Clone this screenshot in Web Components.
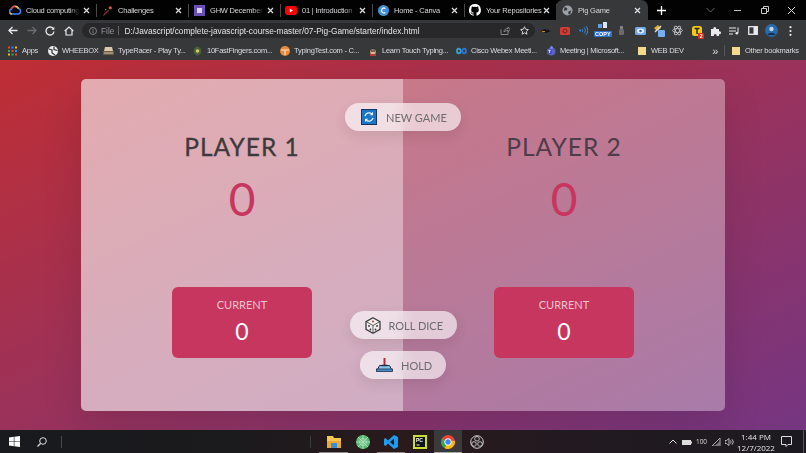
<!DOCTYPE html>
<html lang="en">
<head>
<meta charset="utf-8">
<title>Pig Game</title>
<style>
  html, body { margin: 0; height: 100%; overflow: hidden; }
  body {
    display: flex;
    flex-direction: column;
    width: 806px;
    height: 453px;
    font-family: "Liberation Sans", "Noto Sans", sans-serif;
  }
  svg { display: block; }
</style>
</head>
<body>
<tab-strip>
  <chrome-tab label="Cloud computing" fade>
    <svg viewBox="0 0 12 10" width="12" height="10"><path d="M3 9a2.5 2.5 0 0 1-.6-4.9A3.8 3.8 0 0 1 9.5 3.6 2.8 2.8 0 0 1 9.5 9z" fill="none" stroke="#4285f4" stroke-width="1.6"/><path d="M2.4 4.1A3.8 3.8 0 0 1 6 1.2" fill="none" stroke="#ea4335" stroke-width="1.6"/><path d="M6 1.2a3.8 3.8 0 0 1 3.5 2.4" fill="none" stroke="#fbbc05" stroke-width="1.6"/><path d="M3 9a2.5 2.5 0 0 1-2-1.2" fill="none" stroke="#fbbc05" stroke-width="1.6"/></svg>
  </chrome-tab>
  <chrome-tab label="Challenges">
    <svg viewBox="0 0 12 12" width="11" height="11"><path d="M1 11 7 5l1 1-6 6z" fill="#7d2f35"/><circle cx="9" cy="3" r="1.7" fill="#e0564a"/><circle cx="4" cy="5" r=".7" fill="#d8a23a"/></svg>
  </chrome-tab>
  <chrome-tab label="GHW December" fade>
    <svg viewBox="0 0 11 11" width="11" height="11"><rect width="11" height="11" fill="#6a4fb5"/><rect x="3" y="3" width="5" height="5" fill="#d9d2ef"/></svg>
  </chrome-tab>
  <chrome-tab label="01 | Introduction" fade>
    <svg viewBox="0 0 12 9" width="12" height="9"><rect width="12" height="9" rx="2.4" fill="#f00"/><path d="M4.8 2.6v3.800L8 4.5z" fill="#fff"/></svg>
  </chrome-tab>
  <chrome-tab label="Home - Canva">
    <svg viewBox="0 0 11 11" width="11" height="11"><circle cx="5.5" cy="5.5" r="5.5" fill="#3f8fd8"/><path d="M7.4 3.6A2.4 2.4 0 1 0 7.4 7.4" fill="none" stroke="#fff" stroke-width="1.2"/></svg>
  </chrome-tab>
  <chrome-tab label="Your Repositories">
    <svg viewBox="0 0 16 16" width="12" height="12"><path fill="#fff" d="M8 0a8 8 0 0 0-2.500 15.600c.4.100.5-.2.5-.4v-1.400c-2.200.5-2.700-1-2.700-1-.4-.9-.9-1.200-.9-1.200-.7-.5.100-.5.100-.5.800.100 1.200.8 1.200.8.700 1.200 1.900.9 2.300.7.100-.5.300-.9.500-1.100-1.800-.2-3.600-.9-3.600-4 0-.9.300-1.600.8-2.100-.1-.2-.4-1 .1-2.100 0 0 .7-.2 2.200.8a7.600 7.600 0 0 1 4 0c1.500-1 2.200-.8 2.200-.8.400 1.100.2 1.900.1 2.100.5.600.8 1.300.8 2.100 0 3.100-1.900 3.700-3.600 3.900.3.300.5.800.5 1.500v2.200c0 .2.100.5.600.4A8 8 0 0 0 8 0z"/></svg>
  </chrome-tab>
  <chrome-tab label="Pig Game" active>
    <svg viewBox="0 0 12 12" width="11" height="11"><circle cx="6" cy="6" r="5.500" fill="#9aa0a6"/><path d="M3 2l3 2-1 2-3 0zM7 7l3-1-1 4-2 0z" fill="#35363a"/></svg>
  </chrome-tab>
</tab-strip>

<browser-toolbar url="D:/Javascript/complete-javascript-course-master/07-Pig-Game/starter/index.html"></browser-toolbar>

<bookmark-bar>
  <bookmark-item label="Apps" w="16"><svg viewBox="0 0 9 9" width="9" height="10"><rect width="2" height="2" fill="#ea4335"/><rect x="3.500" width="2" height="2" fill="#4285f4"/><rect x="7" width="2" height="2" fill="#fbbc05"/><rect y="3.500" width="2" height="2" fill="#34a853"/><rect x="3.500" y="3.500" width="2" height="2" fill="#ea4335"/><rect x="7" y="3.500" width="2" height="2" fill="#4285f4"/><rect y="7" width="2" height="2" fill="#fbbc05"/><rect x="3.500" y="7" width="2" height="2" fill="#34a853"/><rect x="7" y="7" width="2" height="2" fill="#ea4335"/></svg></bookmark-item>
  <bookmark-item label="WHEEBOX" w="32"><svg viewBox="0 0 10 10" width="10" height="10"><circle cx="5" cy="5" r="5" fill="#eee"/><path d="M1 3l3 1 0 3 3 2M6 0.500l0 3 3.500 1" fill="none" stroke="#333" stroke-width="1.200"/></svg></bookmark-item>
  <bookmark-item label="TypeRacer - Play Ty..." w="65"><svg viewBox="0 0 11 10" width="11" height="10"><path d="M2 1h7l1 4H1z" fill="#d8c9a8"/><rect x="0" y="5" width="11" height="4" fill="#6e5a44"/><path d="M1 7h9" stroke="#e8e2d4" stroke-width=".8"/></svg></bookmark-item>
  <bookmark-item label="10FastFingers.com..." w="63"><svg viewBox="0 0 10 11" width="9" height="10"><path d="M5 0l4 3v5l-4 3-4-3V3z" fill="#47613a"/><circle cx="5" cy="5.500" r="2" fill="#d9c86a"/></svg></bookmark-item>
  <bookmark-item label="TypingTest.com - C..." w="64"><svg viewBox="0 0 10 10" width="10" height="10"><circle cx="5" cy="5" r="5" fill="#e8883a"/><path d="M1 4h8M5 4v5" stroke="#f7e2c8" stroke-width="1.200"/></svg></bookmark-item>
  <bookmark-item label="Learn Touch Typing..." w="65"><svg viewBox="0 0 10 10" width="10" height="10"><path d="M1 6l4-4 4 4z" fill="#222"/><circle cx="5" cy="6" r="2.800" fill="#e3b48c"/><rect x="2" y="8" width="6" height="2" fill="#b73b3b"/><path d="M3 5h4" stroke="#111"/></svg></bookmark-item>
  <bookmark-item label="Cisco Webex Meeti..." w="65"><svg viewBox="0 0 11 10" width="11" height="10"><path d="M5 5C4 1.500 1 2 1 5s3 3.500 4 0z" fill="none" stroke="#35a4d8" stroke-width="1.800"/><path d="M6 5c1 3.500 4 3 4 0s-3-3.500-4 0z" fill="none" stroke="#2f76d2" stroke-width="1.800"/></svg></bookmark-item>
  <bookmark-item label="Meeting | Microsoft..." w="67"><svg viewBox="0 0 10 10" width="10" height="10"><circle cx="5.500" cy="5.500" r="4" fill="#5b5fc7"/><circle cx="5.500" cy="1.500" r="1.500" fill="#7b83eb"/><rect x="1" y="3" width="5" height="5" fill="#4b53bc"/><path d="M2.300 4.300h2.400M3.500 4.300v2.600" stroke="#fff" stroke-width=".8"/></svg></bookmark-item>
  <bookmark-item label="WEB DEV" w="29"><svg viewBox="0 0 10 10" width="8" height="10"><path d="M0 0h10v10H0z" fill="#f2d98b"/></svg></bookmark-item>
  <span slot="end" class="more">»</span>
  <span slot="end" class="sep"></span>
  <bookmark-item slot="end" label="Other bookmarks" w="55"><svg viewBox="0 0 10 10" width="8" height="10"><path d="M0 0h10v10H0z" fill="#f2d98b"/></svg></bookmark-item>
</bookmark-bar>

<pig-game></pig-game>

<win-taskbar></win-taskbar>

<script>
class TabStrip extends HTMLElement {
  constructor() {
    super();
    this.attachShadow({ mode: "open" });
    this.shadowRoot.innerHTML = `
      <style>
        :host { display: flex; height: 20px; flex: none; background: #020202; padding-left: 5px; color: #e8eaed; font-size: 7.500px; letter-spacing: -.2px; filter: blur(.3px); }
        .plus { width: 22px; margin-left: 2px; display: flex; align-items: center; justify-content: center; }
        .win { margin-left: auto; display: flex; align-items: center; }
        .win span { width: 27px; display: flex; justify-content: center; }
      </style>
      <slot></slot>
      <span class="plus"><svg width="9" height="9" viewBox="0 0 9 9"><path d="M4.500 0v9M0 4.500h9" stroke="#fff" stroke-width="1.300"/></svg></span>
      <div class="win">
        <span><svg width="9" height="6" viewBox="0 0 9 6"><path d="M.5 1l4 4 4-4" fill="none" stroke="#666" stroke-width="1"/></svg></span>
        <span><svg width="9" height="3" viewBox="0 0 9 3"><path d="M1 1.500h7" stroke="#bbb"/></svg></span>
        <span><svg width="8" height="8" viewBox="0 0 8 8"><path d="M.5 2.500h5v5h-5zM2.500 2.500v-2h5v5h-2" fill="none" stroke="#ccc"/></svg></span>
        <span style="margin-right:1px"><svg width="9" height="9" viewBox="0 0 9 9"><path d="M1 1l7 7M8 1l-7 7" stroke="#ddd"/></svg></span>
      </div>`;
  }
}

class ChromeTab extends HTMLElement {
  constructor() {
    super();
    this.attachShadow({ mode: "open" });
    this.shadowRoot.innerHTML = `
      <style>
        :host { display: flex; align-items: center; width: 92px; box-sizing: border-box; padding: 0 6px 0 4px; position: relative; }
        :host(:not([active])):after { content: ""; position: absolute; right: 0; top: 4px; bottom: 3px; width: 1px; background: #4a4a4a; }
        :host([active]) { background: #37383a; border-radius: 7px 7px 0 0; margin-left: -1px; padding-left: 5px; }
        .icon { width: 12px; display: flex; justify-content: center; flex: none; }
        .text { margin-left: 5px; flex: 1; min-width: 0; white-space: nowrap; color: #d7d8da; }
        :host([fade]) .text { -webkit-mask-image: linear-gradient(to right, #000 80%, transparent); }
        .close { width: 9px; flex: none; margin-left: 2px; }
      </style>
      <span class="icon"><slot></slot></span>
      <span class="text"></span>
      <svg class="close" width="7" height="7" viewBox="0 0 7 7"><path d="M1 1l5 5M6 1l-5 5" stroke="#dfe1e5" stroke-width="1.200"/></svg>`;
    this.shadowRoot.querySelector(".text").textContent = this.getAttribute("label");
  }
}

class BrowserToolbar extends HTMLElement {
  constructor() {
    super();
    this.attachShadow({ mode: "open" });
    this.shadowRoot.innerHTML = `
      <style>
        :host { display: flex; align-items: center; height: 21px; flex: none; background: #37383a; padding: 0 4px; color: #e3e4e6; font-size: 8.300px; filter: blur(.3px); }
        .nav { display: flex; width: 74px; margin-right: 4px; flex: none; }
        .nav span { width: 18.500px; display: flex; justify-content: center; }
        .omni { width: 453px; height: 15px; flex: none; box-sizing: border-box; background: #28282a; border-radius: 8px; display: flex; align-items: center; padding: 0 6px 0 7px; }
        .file { color: #93969a; margin-left: 4px; }
        .bar { width: 1px; height: 9px; background: #666; margin: 0 5px 0 4px; }
        .url { flex: 1; white-space: nowrap; }
        .omni svg { flex: none; }
        .exts { display: flex; align-items: center; margin-left: 2px; }
        .exts > span { width: 18.800px; display: flex; justify-content: center; align-items: center; position: relative; flex: none; }
        .copy { font: 700 5.500px/6px "Liberation Sans", sans-serif; background: #2f6fd0; color: #fff; padding: 0 1px; margin-top: 6px; }
        .badge { position: absolute; right: 2px; bottom: -3px; background: #d93025; color: #fff; font: 700 5px/6px "Liberation Sans", sans-serif; width: 6px; text-align: center; border-radius: 1px; }
      </style>
      <div class="nav">
        <span><svg width="10" height="9" viewBox="0 0 10 9"><path d="M9.500 4.500H1M4.500 1L1 4.500 4.500 8" fill="none" stroke="#e8eaed" stroke-width="1.300"/></svg></span>
        <span><svg width="10" height="9" viewBox="0 0 10 9"><path d="M.5 4.500H9M5.500 1L9 4.500 5.500 8" fill="none" stroke="#6b6c70" stroke-width="1.300"/></svg></span>
        <span><svg width="10" height="10" viewBox="0 0 10 10"><path d="M8.500 3A4 4 0 1 0 9 5.500" fill="none" stroke="#e8eaed" stroke-width="1.300"/><path d="M9.300.8v3h-3z" fill="#e8eaed"/></svg></span>
        <span><svg width="10" height="10" viewBox="0 0 10 10"><path d="M.7 5L5 1l4.300 4M2 4.300V9h6V4.300" fill="none" stroke="#e8eaed" stroke-width="1.200"/></svg></span>
      </div>
      <div class="omni">
        <svg width="8" height="8" viewBox="0 0 8 8"><circle cx="4" cy="4" r="3.500" fill="none" stroke="#93969a" stroke-width=".8"/><path d="M4 3.500V6M4 2v1" stroke="#93969a" stroke-width=".8"/></svg>
        <span class="file">File</span><span class="bar"></span>
        <span class="url"></span>
        <svg width="10" height="9" viewBox="0 0 10 9" style="margin-right:10px"><path d="M1 3.500V8.500H8V6M4 6c0-2.500 2-3.500 4-3.500V1l2 2.500L8 6V4.500C6 4.500 5 5 4 6z" fill="none" stroke="#9a9b9e" stroke-width=".8"/></svg>
        <svg width="9" height="9" viewBox="0 0 10 10"><path d="M5 .8l1.300 2.800 3 .4-2.200 2.100.6 3L5 7.600 2.300 9.100l.6-3L.7 4l3-.4z" fill="none" stroke="#e3e4e6"/></svg>
      </div>
      <div class="exts">
        <span><svg width="10" height="5" viewBox="0 0 10 5"><path d="M0 3l4-2 6 2-5 2z" fill="#111"/><rect x="1" y="3" width="3" height="1" fill="#c80"/></svg></span>
        <span><svg width="10" height="9" viewBox="0 0 10 9"><rect y="1" width="10" height="8" rx="1.500" fill="#d13c34"/><circle cx="5" cy="5" r="2" fill="none" stroke="#7b1f1b"/></svg></span>
        <span><svg width="9" height="9" viewBox="0 0 9 9"><path d="M5 1.500a4 4 0 0 1 0 6M6.800 0a6 6 0 0 1 0 9M3 3a2 2 0 0 1 0 3" fill="none" stroke="#2f8fe8" stroke-width="1"/><circle cx="1.200" cy="4.500" r="1" fill="#2f8fe8"/></svg></span>
        <span style="flex-direction:column"><svg width="12" height="6" viewBox="0 0 12 6" style="position:absolute;top:-3px"><rect x="1" y="2" width="4" height="4" fill="#5c9be8"/><rect x="6" width="4" height="6" fill="#d9e6f7"/></svg><span class="copy">COPY</span></span>
        <span><svg width="5" height="9" viewBox="0 0 5 9"><rect x="1" y="0" width="3" height="3" rx="1" fill="#8a8a8a"/><rect y="3" width="5" height="6" rx="1.500" fill="#6c6c6c"/></svg></span>
        <span><svg width="11" height="8" viewBox="0 0 11 8"><rect width="11" height="8" rx="1.500" fill="#6ea9e8"/><ellipse cx="5.500" cy="4" rx="3.500" ry="2.400" fill="#e8f1fb"/><circle cx="5.500" cy="4" r="1.300" fill="#3568a8"/></svg></span>
        <span><svg width="13" height="13" viewBox="0 0 13 13"><path d="M1 4l4-3 3 3-4 3z" fill="#e0b030"/><path d="M2 8l6-6" stroke="#d8d8d8" stroke-width="1.400"/><rect x="5" y="6" width="7" height="7" rx="1" fill="#76aef0"/></svg></span>
        <span><svg width="11" height="11" viewBox="0 0 11 11"><g fill="none" stroke="#c9ccd1" stroke-width=".8"><ellipse cx="5.500" cy="5.500" rx="5" ry="2"/><ellipse cx="5.500" cy="5.500" rx="5" ry="2" transform="rotate(60 5.500 5.500)"/><ellipse cx="5.500" cy="5.500" rx="5" ry="2" transform="rotate(120 5.500 5.500)"/></g></svg></span>
        <span><svg width="10" height="10" viewBox="0 0 10 10"><rect width="10" height="10" rx="2.500" fill="#f2c81e"/><path d="M2.500 2.500h5M5 2.500v5.500" stroke="#222" stroke-width="1.400"/></svg><span class="badge">2</span></span>
        <span><svg width="10" height="10" viewBox="0 0 10 10"><path d="M0 3h2.500a1.400 1.400 0 1 1 2.500 0H8v2.500a1.400 1.400 0 1 1 0 2.500V10H5.500a1.400 1.400 0 1 0-2.500 0H0z" fill="#e8eaed"/></svg></span>
        <span><svg width="10" height="8" viewBox="0 0 10 8"><path d="M0 1h7M0 4h7M0 7h4" stroke="#e8eaed" stroke-width="1"/><path d="M9 .5V6" stroke="#e8eaed"/><circle cx="7.800" cy="6.300" r="1.300" fill="#e8eaed"/></svg></span>
        <span><svg width="10" height="9" viewBox="0 0 10 9"><rect x=".7" y=".7" width="8.600" height="7.600" fill="none" stroke="#e8eaed" stroke-width="1.300"/><rect x="5.500" y=".7" width="3.800" height="7.600" fill="#e8eaed"/></svg></span>
        <span><svg width="13" height="13" viewBox="0 0 13 13"><circle cx="6.500" cy="6.500" r="6.500" fill="#2a6aa8"/><circle cx="6.500" cy="5" r="2.200" fill="#bcd7ee"/><path d="M2.500 11c1-3 7-3 8 0" fill="#12324f"/></svg></span>
        <span><svg width="3" height="10" viewBox="0 0 3 10"><circle cx="1.500" cy="1.200" r="1.100" fill="#e8eaed"/><circle cx="1.500" cy="5" r="1.100" fill="#e8eaed"/><circle cx="1.500" cy="8.800" r="1.100" fill="#e8eaed"/></svg></span>
      </div>`;
    this.shadowRoot.querySelector(".url").textContent = this.getAttribute("url");
  }
}

class BookmarkBar extends HTMLElement {
  constructor() {
    super();
    this.attachShadow({ mode: "open" });
    this.shadowRoot.innerHTML = `
      <style>
        :host { display: flex; align-items: center; height: 19px; flex: none; background: #37383a; padding-left: 7px; color: #dcdde0; font-size: 7.500px; letter-spacing: -.25px; filter: blur(.3px); }
        .main { display: flex; gap: 9px; }
        .end { margin-left: auto; display: flex; align-items: center; padding-right: 6px; }
        ::slotted(.more) { font-size: 11px; margin-right: 6px; line-height: 10px; }
        ::slotted(.sep) { width: 1px; height: 11px; background: #55565a; margin-right: 5px; }
      </style>
      <div class="main"><slot></slot></div>
      <div class="end"><slot name="end"></slot></div>`;
  }
}

class BookmarkItem extends HTMLElement {
  constructor() {
    super();
    this.attachShadow({ mode: "open" });
    this.shadowRoot.innerHTML = `
      <style>
        :host { display: flex; align-items: center; }
        .icon { width: 11px; display: flex; justify-content: center; margin-right: 4px; flex: none; }
        .text { white-space: nowrap; }
      </style>
      <span class="icon"><slot></slot></span><span class="text"></span>`;
    const text = this.shadowRoot.querySelector(".text");
    text.textContent = this.getAttribute("label");
    text.style.width = this.getAttribute("w") + "px";
  }
}

class PlayerPanel extends HTMLElement {
  constructor() {
    super();
    this.attachShadow({ mode: "open" });
    this.shadowRoot.innerHTML = `
      <style>
        :host { display: flex; flex-direction: column; align-items: center; padding: 53px 0 53px; background: rgba(255, 255, 255, 0.6); }
        :host([dim]) { background: rgba(255, 255, 255, 0.35); }
        .name { font-size: 24.500px; line-height: 29px; letter-spacing: 1px; color: #3d3a3c; -webkit-text-stroke: .3px #3d3a3c; }
        :host([dim]) .name { color: #4e3c48; -webkit-text-stroke: 0; }
        .score { font-size: 46px; line-height: 64px; margin-top: 6px; color: #c7365f; font-weight: 400; }
        .current { margin-top: auto; width: 140px; height: 71px; box-sizing: border-box; background: #c7365f; border-radius: 6px; color: #fff;
          display: flex; flex-direction: column; align-items: center; padding-top: 10px; }
        .label { font-size: 11px; line-height: 15px; color: #ecc3cf; }
        .num { font-size: 23px; line-height: 32px; margin-top: 3px; }
      </style>
      <div class="name"></div>
      <div class="score">0</div>
      <div class="current"><div class="label">CURRENT</div><div class="num">0</div></div>`;
    this.shadowRoot.querySelector(".name").textContent = this.getAttribute("name");
  }
}

class GameBtn extends HTMLElement {
  constructor() {
    super();
    this.attachShadow({ mode: "open" });
    this.shadowRoot.innerHTML = `
      <style>
        :host { display: flex; align-items: center; height: 28px; box-sizing: border-box; border-radius: 14px; flex: none;
          background: rgba(255, 255, 255, 0.62); box-shadow: 0 5px 14px rgba(0, 0, 0, 0.09); backdrop-filter: blur(8px);
          color: #6f6a70; font-size: 11px; white-space: nowrap; }
        .icon { display: flex; justify-content: center; flex: none; }
      </style>
      <span class="icon"><slot></slot></span><span class="text"></span>`;
    this.shadowRoot.querySelector(".text").textContent = this.getAttribute("label");
  }
}

class PigGame extends HTMLElement {
  constructor() {
    super();
    this.attachShadow({ mode: "open" });
    this.shadowRoot.innerHTML = `
      <style>
        :host { display: flex; flex: 1; align-items: center; justify-content: center; min-height: 0;
          background: linear-gradient(to top left, #753682 0%, #bf2e34 100%); font-family: "Lato", "Open Sans", sans-serif; }
        main { position: relative; display: grid; grid-template-columns: 1fr 1fr; width: 644px; height: 332px; border-radius: 5px; overflow: hidden;
          box-shadow: 0 16px 40px rgba(0, 0, 0, 0.12); }
        .controls { position: absolute; inset: 0; display: flex; flex-direction: column; align-items: center; padding: 24px 0 32px; box-sizing: border-box; }
        .low { margin-top: auto; display: flex; flex-direction: column; align-items: center; gap: 12px; }
        .new { width: 116px; padding-left: 16px; }
        .new svg { margin-right: 9px; }
        .roll { width: 107px; padding-left: 15px; }
        .roll svg { margin-right: 8px; }
        .hold { width: 86px; padding-left: 16px; }
        .hold svg { margin-right: 8px; }
      </style>
      <main>
        <player-panel name="PLAYER 1"></player-panel>
        <player-panel name="PLAYER 2" dim></player-panel>
        <div class="controls">
          <game-btn class="new" label="NEW GAME">
            <svg width="16" height="16" viewBox="0 0 16 16"><rect width="16" height="16" fill="#17365f"/><rect x="1" y="1" width="14" height="14" fill="#1976c9"/><path d="M4 7a4.200 4.200 0 0 1 7-2M12 9a4.200 4.200 0 0 1-7 2" fill="none" stroke="#e6f2fb" stroke-width="1.300"/><path d="M12 2.800v3.400H8.800zM4 13.200V9.800h3.200z" fill="#e6f2fb"/></svg>
          </game-btn>
          <div class="low">
            <game-btn class="roll" label="ROLL DICE">
              <svg width="16" height="17" viewBox="0 0 16 17"><path d="M8 .8l7 3.800v7.800l-7 3.800-7-3.800V4.600z" fill="#f3eeee" stroke="#3c3a3c" stroke-width="1.300"/><path d="M1.500 4.800L8 8.500l6.500-3.700M8 8.500v7.500" fill="none" stroke="#3c3a3c" stroke-width=".8"/><circle cx="8" cy="4.600" r="1" fill="#b0413e"/><circle cx="4" cy="9" r=".9" fill="#333"/><circle cx="5.500" cy="12.500" r=".9" fill="#333"/><circle cx="12" cy="9" r=".9" fill="#333"/><circle cx="10.500" cy="12.500" r=".9" fill="#333"/></svg>
            </game-btn>
            <game-btn class="hold" label="HOLD">
              <svg width="17" height="14" viewBox="0 0 17 14"><rect x="7.500" y="0" width="2" height="7" fill="#b3283c"/><path d="M1 12.500l2.500-5h10l2.500 5z" fill="#8ac3ea" stroke="#1e2f4a" stroke-width="1"/><rect x=".5" y="11" width="16" height="2.500" fill="#4a8cc8" stroke="#1e2f4a" stroke-width=".8"/><path d="M5.500 7.500h6" stroke="#1e2f4a" stroke-width="1.500"/></svg>
            </game-btn>
          </div>
        </div>
      </main>`;
  }
}

class WinTaskbar extends HTMLElement {
  constructor() {
    super();
    this.attachShadow({ mode: "open" });
    this.shadowRoot.innerHTML = `
      <style>
        :host { display: flex; align-items: center; height: 23px; flex: none; color: #dcdcdc; font-size: 8px; font-family: "Open Sans", sans-serif; filter: blur(.25px);
          background: linear-gradient(to right, #181a1d 0%, #1b1a1d 30%, #2a1a1c 50%, #221a20 70%, #1c1a20 100%); }
        .slot { display: flex; align-items: center; justify-content: center; flex: none; height: 23px; }
        .sep { width: 1px; height: 12px; background: #3c3c3e; flex: none; }
        .spring { flex: 1; }
        .run { box-shadow: inset 0 -1px 0 #8e8e8e; }
        .active { background: #3a393b; box-shadow: inset 0 -1px 0 #a8a8a8; }
        .clock { width: 40px; text-align: center; font-size: 8px; line-height: 11px; color: #e4e4e4; }
      </style>
      <span class="slot" style="width:28px"><svg width="11" height="11" viewBox="0 0 11 11"><path d="M0 1.500l4.800-.7v4.400H0zM5.400.7L11 0v5.200H5.400zM0 5.800h4.800v4.400L0 9.500zM5.400 5.800H11V11l-5.600-.8z" fill="#fff"/></svg></span>
      <span class="slot" style="width:28px"><svg width="10" height="10" viewBox="0 0 10 10"><circle cx="6" cy="4" r="3.300" fill="none" stroke="#ddd"/><path d="M3.500 6.500L.5 9.500" stroke="#ddd" stroke-width="1.200"/></svg></span>
      <span class="sep" style="margin-left:5px;background:#4a4a4c"></span>
      <span class="sep" style="margin-left:248px"></span>
      <span class="slot run" style="width:29px;margin-left:8px"><svg width="14" height="12" viewBox="0 0 14 12"><path d="M0 0h6l1 2h7v10H0z" fill="#f5c451"/><rect x="0" y="5" width="14" height="7" fill="#e8a93a"/><rect x="4" y="7" width="6" height="5" fill="#3a8fd8"/></svg></span>
      <span class="slot" style="width:29px"><svg width="14" height="14" viewBox="0 0 14 14"><circle cx="7" cy="7" r="7" fill="#5cb874"/><g fill="none" stroke="#b5e6c3" stroke-width=".8"><circle cx="7" cy="7" r="3.500"/><path d="M0 7h14M7 0v14M2 2l10 10M12 2L2 12"/></g></svg></span>
      <span class="slot run" style="width:28px"><svg width="14" height="14" viewBox="0 0 14 14"><path d="M10 0l4 2v10l-4 2-6-5.500L1.500 11 0 10V4l1.500-1L4 5.500z" fill="#1f9cf0"/><path d="M10 3.500L6 7l4 3.500z" fill="#181a1d"/></svg></span>
      <span class="slot" style="width:29px"><svg width="14" height="14" viewBox="0 0 14 14"><rect width="14" height="14" fill="#c9df34"/><rect x="2" y="2" width="10" height="10" fill="#10131a"/><text x="3" y="7" font-size="5" font-weight="700" font-family="Liberation Sans" fill="#fff">PC</text><path d="M3.500 10h3" stroke="#fff"/></svg></span>
      <span class="slot active" style="width:28px"><svg width="14" height="14" viewBox="0 0 14 14"><circle cx="7" cy="7" r="7" fill="#ea4335"/><path d="M7 7L13.800 5.500A7 7 0 0 1 3.500 13z" fill="#fbbc05"/><path d="M7 7L3.500 13A7 7 0 0 1 1 3.500z" fill="#34a853"/><circle cx="7" cy="7" r="3.300" fill="#4285f4" stroke="#fff" stroke-width="1"/></svg></span>
      <span class="slot" style="width:29px"><svg width="14" height="14" viewBox="0 0 14 14"><circle cx="7" cy="7" r="6.300" fill="none" stroke="#cfcfcf"/><g fill="none" stroke="#cfcfcf" stroke-width=".9"><circle cx="7" cy="3.800" r="2.300"/><circle cx="4" cy="9" r="2.300"/><circle cx="10" cy="9" r="2.300"/></g></svg></span>
      <span class="spring"></span>
      <span class="slot" style="width:14px"><svg width="8" height="5" viewBox="0 0 8 5"><path d="M.5 4.500L4 1l3.500 3.500" fill="none" stroke="#ddd"/></svg></span>
      <span class="slot" style="width:14px"><svg width="10" height="6" viewBox="0 0 10 6"><rect y="1" width="9" height="5" fill="#ddd"/><rect x="9" y="2.500" width="1" height="2" fill="#ddd"/></svg></span>
      <span class="slot" style="width:15px;font-size:6.500px">100</span>
      <span class="slot" style="width:14px"><svg width="9" height="8" viewBox="0 0 9 8"><path d="M8 8H0L8 0z" fill="none" stroke="#aaa"/><path d="M2.500 8L8 3v5z" fill="#777"/></svg></span>
      <span class="slot" style="width:13px"><svg width="9" height="8" viewBox="0 0 9 8"><path d="M0 2.500h1.500L4 .5v7L1.500 5.500H0z" fill="none" stroke="#ddd" stroke-width=".8"/><path d="M5.500 2.500a2.200 2.200 0 0 1 0 3M7 1.200a4 4 0 0 1 0 5.600" fill="none" stroke="#ddd" stroke-width=".8"/></svg></span>
      <span class="slot clock"><span>1:44 PM<br>12/7/2022</span></span>
      <span class="slot" style="width:20px;margin-right:7px"><svg width="11" height="11" viewBox="0 0 11 11"><path d="M.5.500h10v8H7L5 10.500V8.500H.5z" fill="none" stroke="#ddd"/></svg></span>
      <span class="sep" style="height:23px;margin-right:2px;background:#555"></span>`;
  }
}

customElements.define("tab-strip", TabStrip);
customElements.define("chrome-tab", ChromeTab);
customElements.define("browser-toolbar", BrowserToolbar);
customElements.define("bookmark-bar", BookmarkBar);
customElements.define("bookmark-item", BookmarkItem);
customElements.define("player-panel", PlayerPanel);
customElements.define("game-btn", GameBtn);
customElements.define("pig-game", PigGame);
customElements.define("win-taskbar", WinTaskbar);
</script>
</body>
</html>
